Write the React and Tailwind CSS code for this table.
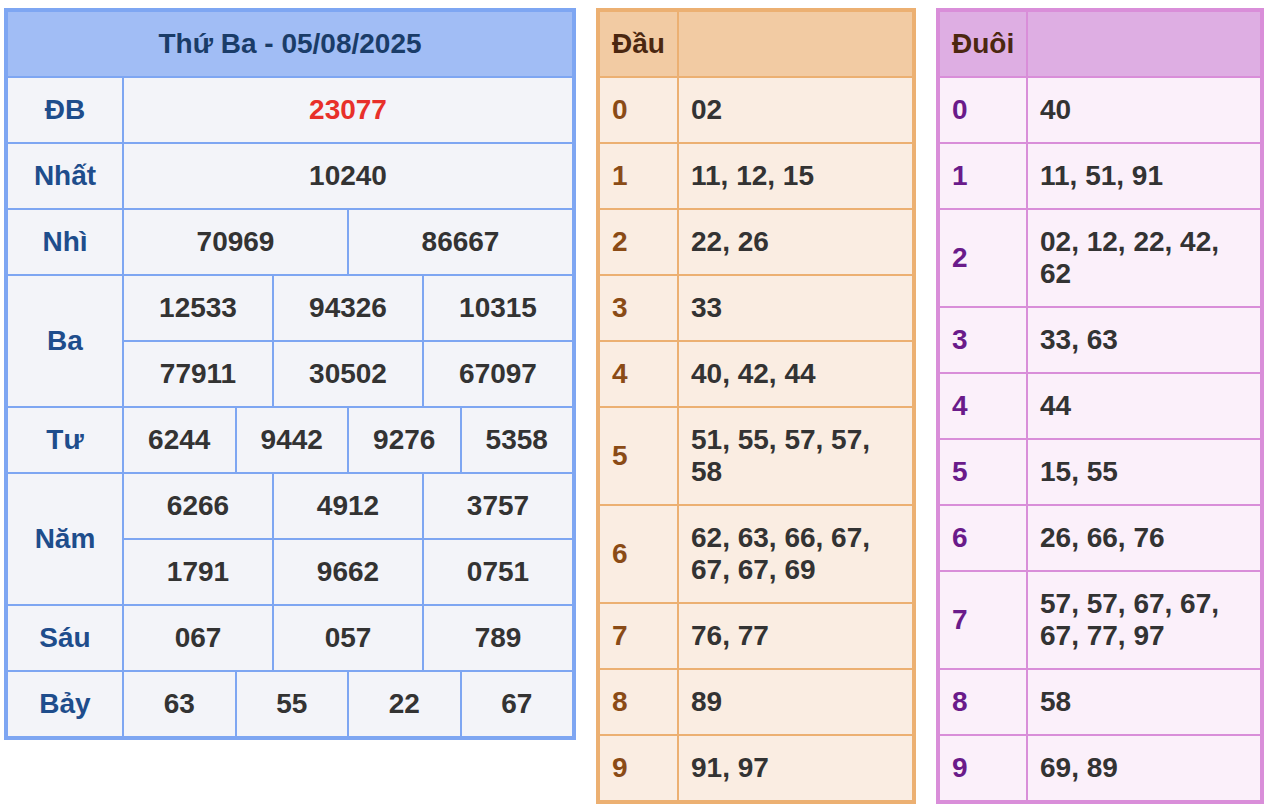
const prizes = [
    { label: "ĐB", rows: [["23077"]], red: true },
    { label: "Nhất", rows: [["10240"]] },
    { label: "Nhì", rows: [["70969", "86667"]] },
    { label: "Ba", rows: [["12533", "94326", "10315"], ["77911", "30502", "67097"]] },
    { label: "Tư", rows: [["6244", "9442", "9276", "5358"]] },
    { label: "Năm", rows: [["6266", "4912", "3757"], ["1791", "9662", "0751"]] },
    { label: "Sáu", rows: [["067", "057", "789"]] },
    { label: "Bảy", rows: [["63", "55", "22", "67"]] },
]

const dau = [
    "02", "11, 12, 15", "22, 26", "33", "40, 42, 44",
    "51, 55, 57, 57, 58", "62, 63, 66, 67, 67, 67, 69", "76, 77", "89", "91, 97",
]

const duoi = [
    "40", "11, 51, 91", "02, 12, 22, 42, 62", "33, 63", "44",
    "15, 55", "26, 66, 76", "57, 57, 67, 67, 67, 77, 97", "58", "69, 89",
]

function ResultTable() {
    return (
        <div className="w-[572px] border-4 border-[#7ea6f2] bg-[#7ea6f2] flex flex-col gap-[2px]">
            <div className="bg-[#a1bdf5] py-4 text-center text-[#1a3c68]">Thứ Ba - 05/08/2025</div>
            {prizes.map((p) => (
                <div key={p.label} className="flex gap-[2px]">
                    <div className="w-[114px] shrink-0 bg-[#f3f4f9] flex items-center justify-center text-[#1e4d8c]">
                        {p.label}
                    </div>
                    <div className="flex-1 flex flex-col gap-[2px]">
                        {p.rows.map((r, i) => (
                            <div key={i} className="flex gap-[2px]">
                                {r.map((n, j) => (
                                    <div key={j} className={"flex-1 basis-0 bg-[#f3f4f9] py-4 text-center " + (p.red ? "text-[#e8302a]" : "text-[#333333]")}>
                                        {n}
                                    </div>
                                ))}
                            </div>
                        ))}
                    </div>
                </div>
            ))}
        </div>
    )
}

function LotoTable({ title, items, keyW, border, head, cell, keyColor }) {
    return (
        <div className={"flex flex-col gap-[2px] border-4 " + border}>
            <div className="flex gap-[2px]">
                <div className={"shrink-0 px-3 py-4 text-[#4b2710] " + keyW + " " + head}>{title}</div>
                <div className={"flex-1 " + head}></div>
            </div>
            {items.map((v, i) => (
                <div key={i} className="flex gap-[2px]">
                    <div className={"shrink-0 px-3 flex items-center " + keyW + " " + cell + " " + keyColor}>{i}</div>
                    <div className={"flex-1 px-3 py-4 text-[#333333] " + cell}>{v}</div>
                </div>
            ))}
        </div>
    )
}

export default function App() {
    return (
        <div className="bg-white min-h-[812px] pt-2 pl-1 flex items-start gap-5 text-[28px] leading-[32px] font-bold font-['Liberation_Sans',Arial,sans-serif]">
            <ResultTable />
            <div className="w-[320px]">
                <LotoTable title="Đầu" items={dau} keyW="w-[77px]" border="border-[#ecb072] bg-[#ecb072]" head="bg-[#f2cba3]" cell="bg-[#faede2]" keyColor="text-[#8a4b16]" />
            </div>
            <div className="w-[328px]">
                <LotoTable title="Đuôi" items={duoi} keyW="w-[86px]" border="border-[#d98ed9] bg-[#d98ed9]" head="bg-[#deaee3]" cell="bg-[#fbf0fa]" keyColor="text-[#6a1b8a]" />
            </div>
        </div>
    )
}
